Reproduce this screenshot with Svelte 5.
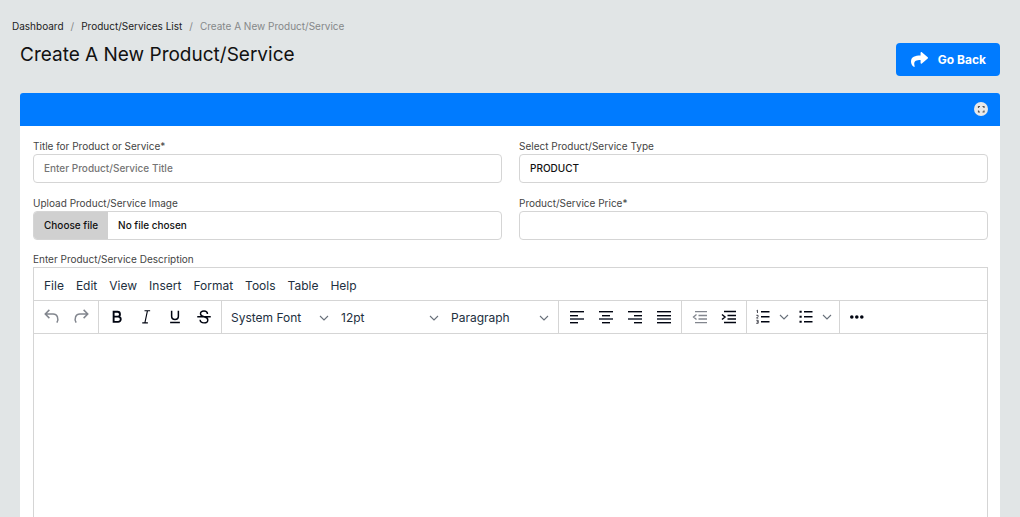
<script>
  const menus = ['File', 'Edit', 'View', 'Insert', 'Format', 'Tools', 'Table', 'Help'];
  const picks = ['System Font', '12pt', 'Paragraph'];
  const aligns = [
    { name: 'Align left', x: [5, 5, 5, 5], w: [14, 8, 14, 8] },
    { name: 'Align center', x: [5, 8, 5, 8], w: [14, 8, 14, 8] },
    { name: 'Align right', x: [5, 11, 5, 11], w: [14, 8, 14, 8] },
    { name: 'Justify', x: [5, 5, 5, 5], w: [14, 14, 14, 14] }
  ];
  const rows = [6, 10, 13, 17];
  let title = $state('');
  let type = $state('PRODUCT');
  let price = $state('');
  let files = $state();
</script>

{#snippet chevron()}
  <svg class="chevron" viewBox="0 0 10 10" aria-hidden="true"><path d="M1 3l4 4 4-4" fill="none" stroke="currentColor" stroke-width="1.1" /></svg>
{/snippet}

<div class="page">
  <header>
    <nav aria-label="Breadcrumb">
      <ol>
        <li><a href="#dashboard">Dashboard</a></li>
        <li><a href="#list">Product/Services List</a></li>
        <li aria-current="page">Create A New Product/Service</li>
      </ol>
    </nav>
    <div class="heading">
      <h1>Create A New Product/Service</h1>
      <button class="back" type="button">
        <svg viewBox="0 0 512 512" aria-hidden="true"><path fill="currentColor" d="M503.7 189.8L327.7 37.9C312.3 24.5 288 35.3 288 56v80.1C127.400 137.900 0 170.100 0 322.300c0 61.400 39.600 122.300 83.300 154.100 13.700 9.900 33.100-2.500 28.100-18.600C66.100 312.800 132.900 274.300 288 272.100V360c0 20.700 24.300 31.500 39.700 18.200l176-152c11.100-9.600 11.100-26.800 0-36.400z" /></svg>
        Go Back
      </button>
    </div>
  </header>

  <main>
    <div class="bar">
      <button class="expand" type="button" aria-label="Full screen">
        <svg viewBox="0 0 14 14" aria-hidden="true"><path d="M4.500 6V4.500H6M8.500 4.500H10V6M10 8.500V10H8.500M6 10H4.500V8.500" fill="none" stroke="#555" stroke-width="1.200" /></svg>
      </button>
    </div>
    <form>
      <div class="fields">
        <div class="field">
          <label for="title">Title for Product or Service*</label>
          <input id="title" class="control" placeholder="Enter Product/Service Title" bind:value={title} />
        </div>
        <div class="field">
          <label for="type">Select Product/Service Type</label>
          <select id="type" class="control" bind:value={type}><option>PRODUCT</option><option>SERVICE</option></select>
        </div>
        <div class="field">
          <label for="image">Upload Product/Service Image</label>
          <div class="control file">
            <span class="choose">Choose file</span>
            <span class="chosen">{files?.[0]?.name ?? 'No file chosen'}</span>
            <input id="image" type="file" bind:files />
          </div>
        </div>
        <div class="field">
          <label for="price">Product/Service Price*</label>
          <input id="price" class="control" bind:value={price} />
        </div>
      </div>

      <label for="description">Enter Product/Service Description</label>
      <div class="editor">
        <div class="menubar">
          {#each menus as menu}<button type="button">{menu}</button>{/each}
        </div>
        <div class="toolbar">
          <div class="group">
            <button class="tool dim" type="button" aria-label="Undo"><svg viewBox="0 0 24 24"><path d="M8.500 2.500L3 8l5.500 5.500M3 8h10.500c5.500 0 8 6 5 11.500" fill="none" stroke="currentColor" stroke-width="2" /></svg></button>
            <button class="tool dim" type="button" aria-label="Redo"><svg viewBox="0 0 24 24"><path d="M15.500 2.500L21 8l-5.500 5.500M21 8H10.500C5 8 2.500 14 5.500 19.500" fill="none" stroke="currentColor" stroke-width="2" /></svg></button>
          </div>
          <div class="group">
            <button class="tool" type="button" aria-label="Bold"><svg viewBox="0 0 24 24"><path d="M7.500 5h5.200a3.200 3.200 0 0 1 0 6.500H7.500zM7.500 11.500h6a3.500 3.500 0 0 1 0 7h-6z" fill="none" stroke="currentColor" stroke-width="2.500" /></svg></button>
            <button class="tool" type="button" aria-label="Italic"><svg viewBox="0 0 24 24"><path d="M10 3.700h7.500M7 19.800h7.500M13.900 3.700l-3.400 16" fill="none" stroke="currentColor" stroke-width="1.500" /></svg></button>
            <button class="tool" type="button" aria-label="Underline"><svg viewBox="0 0 24 24"><path d="M7.500 3.500v7.500c0 2.700 1.700 4.300 4.500 4.300s4.500-1.600 4.500-4.300V3.500M5.500 19.300h13" fill="none" stroke="currentColor" stroke-width="2" /></svg></button>
            <button class="tool" type="button" aria-label="Strikethrough"><svg viewBox="0 0 24 24"><path d="M16.700 8C16.500 5.400 14.500 4 12 4c-2.800 0-4.700 1.500-4.700 3.800 0 2.300 2 3.200 4.700 3.900 3 .8 5.100 1.700 5.100 4.200 0 2.400-2.100 3.900-5.100 3.900-3.100 0-5.100-1.500-5.200-4.100M3 11.700h18" fill="none" stroke="currentColor" stroke-width="1.900" /></svg></button>
          </div>
          <div class="group">
            {#each picks as pick}
              <button class="pick" type="button"><span>{pick}</span>{@render chevron()}</button>
            {/each}
          </div>
          <div class="group">
            {#each aligns as align}
              <button class="tool" type="button" aria-label={align.name}>
                <svg class="lines" viewBox="0 0 24 24">
                  {#each rows as y, i}<rect x={align.x[i]} {y} width={align.w[i]} height={i === 2 ? 2 : 1.4} fill={i === 2 ? '#565b66' : 'currentColor'} />{/each}
                </svg>
              </button>
            {/each}
          </div>
          <div class="group">
            <button class="tool dim" type="button" aria-label="Decrease indent"><svg class="lines" viewBox="0 0 24 24"><path d="M7 6.600h12M10.500 10.500h8.500M10.500 14h8.500M7 17.600h12M8.500 9.500L5.500 12l3 2.500" fill="none" stroke="currentColor" stroke-width="1.300" /></svg></button>
            <button class="tool" type="button" aria-label="Increase indent"><svg class="lines" viewBox="0 0 24 24"><path d="M7 6.600h12M10.500 10.500h8.500M10.500 14h8.500M7 17.600h12M5 9.500L8 12l-3 2.500" fill="none" stroke="currentColor" stroke-width="1.500" /></svg></button>
          </div>
          <div class="group">
            <button class="split" type="button" aria-label="Numbered list"><svg class="lines" viewBox="0 0 24 24"><path d="M10 6.800h8.500M10 11.800h8.500M10 16.800h8.500" stroke="currentColor" stroke-width="1.500" /><path d="M5.500 5.800l1-.6v2.800M5.300 10.300h1.800v1.200l-1.600 1.600h1.800M5.300 15.300h1.900v3h-2M5.800 16.800h1.400" fill="none" stroke="currentColor" stroke-width=".7" /></svg>{@render chevron()}</button>
            <button class="split" type="button" aria-label="Bullet list"><svg class="lines" viewBox="0 0 24 24"><path d="M10 6.800h8.500M10 11.800h8.500M10 16.800h8.500" stroke="currentColor" stroke-width="1.500" /><path d="M5.500 6.800h2.200M5.500 11.800h2.200M5.500 16.800h2.200" stroke="currentColor" stroke-width="2" /></svg>{@render chevron()}</button>
          </div>
          <div class="group">
            <button class="tool" type="button" aria-label="More"><svg class="lines" viewBox="0 0 24 24" fill="currentColor"><circle cx="6.800" cy="12" r="1.800" /><circle cx="11.800" cy="12" r="1.800" /><circle cx="16.800" cy="12" r="1.800" /></svg></button>
          </div>
        </div>
        <textarea id="description"></textarea>
      </div>
    </form>
  </main>
</div>

<style>
  :global(body) { margin: 0; }
  * { box-sizing: border-box; }
  .page {
    display: flex;
    flex-direction: column;
    min-height: 100vh;
    background: #e1e5e6;
    font: 10px/16px Inter, sans-serif;
    color: #444;
  }
  button, input, select, textarea { font: inherit; color: inherit; }
  button { border: 0; padding: 0; background: none; }
  header { padding: 18px 20px 17px 12px; }
  ol { display: flex; margin: 0; padding: 0; list-style: none; color: #858889; }
  li + li::before { content: '/'; padding: 0 7px; }
  a { color: #222; text-decoration: none; }
  .heading { display: flex; justify-content: space-between; padding: 9px 0 0 8px; }
  h1 { margin: 0; font-size: 19px; font-weight: 400; line-height: 24px; color: #111; }
  .back {
    display: flex;
    align-items: center;
    gap: 10px;
    height: 33px;
    padding: 0 14px 0 15px;
    border-radius: 4px;
    background: #007bff;
    color: #fff;
    font-size: 12px;
    font-weight: 700;
  }
  .back svg { width: 17px; height: 17px; }
  main { flex: 1; display: flex; flex-direction: column; margin: 0 20px; background: #fff; border-radius: 3px 3px 0 0; }
  .bar { display: flex; align-items: center; justify-content: flex-end; height: 33px; padding: 0 12px 2px 0; border-radius: 3px 3px 0 0; background: #007bff; }
  .expand { width: 14px; height: 14px; border-radius: 50%; background: #e9e9e9; }
  .expand svg { display: block; }
  form { flex: 1; display: flex; flex-direction: column; padding: 12px 12px 0 13px; }
  .fields { display: grid; grid-template-columns: 1fr 1fr; gap: 12px 17px; margin-bottom: 11px; }
  label { display: block; }
  .control { display: block; width: 100%; height: 29px; padding: 0 10px 2px; border: 1px solid #d5d5d5; border-radius: 4px; background: #fff; color: #111; font-weight: 500; appearance: none; }
  .control::placeholder { color: #757575; opacity: 1; }
  .file { position: relative; display: flex; align-items: center; padding: 0; overflow: hidden; }
  .file input { position: absolute; inset: 0; width: 100%; opacity: 0; }
  .file span { display: flex; align-items: center; height: 100%; padding: 0 10px 2px; }
  .choose { background: #d0d0d0; }
  .editor { flex: 1; display: flex; flex-direction: column; border: 1px solid #d5d5d5; border-bottom: 0; font-size: 12px; color: #222f3e; }
  .menubar { display: flex; align-items: center; gap: 12px; height: 33px; padding: 3px 10px 0; border-bottom: 1px solid #d5d5d5; }
  .toolbar { display: flex; height: 33px; border-bottom: 1px solid #d5d5d5; }
  .group { display: flex; align-items: center; padding: 0 3px; border-right: 1px solid #d5d5d5; }
  .group:last-child { border: 0; padding: 0 2px; }
  .tool { display: flex; align-items: center; justify-content: center; width: 29px; height: 28px; color: #000410; }
  .tool svg { width: 18px; height: 18px; }
  .tool .lines, .split .lines { width: 24px; height: 24px; }
  .dim { color: #82868e; }
  .pick { display: flex; align-items: center; justify-content: space-between; width: 110px; height: 28px; padding: 2px 6px 0; }
  .chevron { width: 10px; height: 10px; color: #68707a; }
  .split { display: flex; align-items: center; gap: 4px; width: 43px; height: 28px; padding-left: 1px; color: #000410; }
  textarea { flex: 1; width: 100%; border: 0; padding: 12px; resize: none; background: #fff; outline: 0; }
</style>
